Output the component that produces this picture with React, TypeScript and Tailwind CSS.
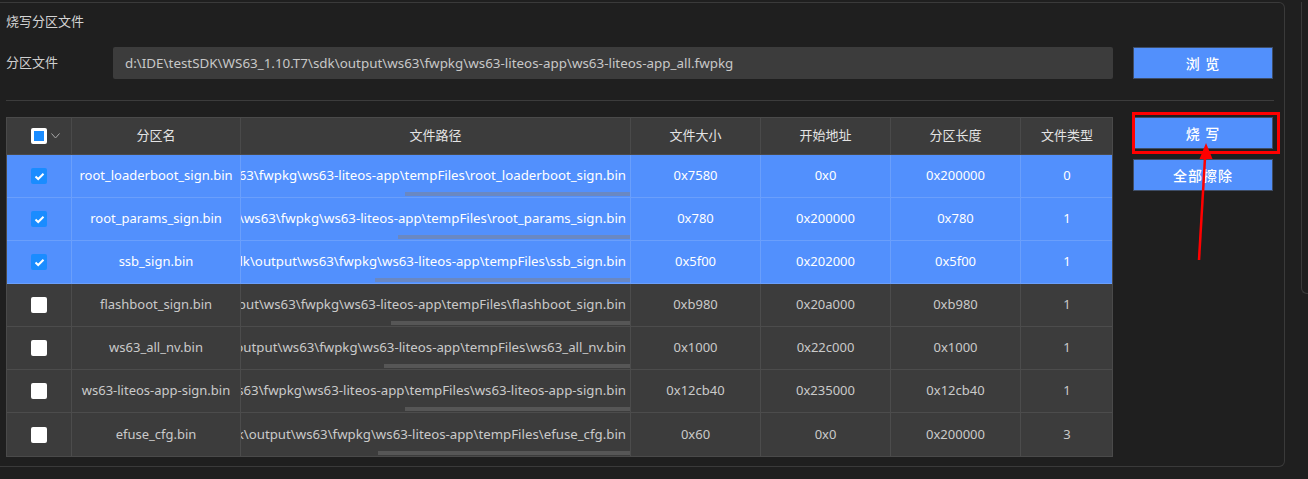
import React from "react";

const base = "d:\\IDE\\testSDK\\WS63_1.10.T7\\sdk\\output\\ws63\\fwpkg\\ws63-liteos-app\\tempFiles\\";

const rows = [
  { name: "root_loaderboot_sign.bin", size: "0x7580", start: "0x0", len: "0x200000", type: "0", checked: true, thumb: 225 },
  { name: "root_params_sign.bin", size: "0x780", start: "0x200000", len: "0x780", type: "1", checked: true, thumb: 232 },
  { name: "ssb_sign.bin", size: "0x5f00", start: "0x202000", len: "0x5f00", type: "1", checked: true, thumb: 255 },
  { name: "flashboot_sign.bin", size: "0xb980", start: "0x20a000", len: "0xb980", type: "1", checked: false, thumb: 239 },
  { name: "ws63_all_nv.bin", size: "0x1000", start: "0x22c000", len: "0x1000", type: "1", checked: false, thumb: 246 },
  { name: "ws63-liteos-app-sign.bin", size: "0x12cb40", start: "0x235000", len: "0x12cb40", type: "1", checked: false, thumb: 225 },
  { name: "efuse_cfg.bin", size: "0x60", start: "0x0", len: "0x200000", type: "3", checked: false, thumb: 252 },
];

const cols = "grid grid-cols-[65px_169px_390px_130px_130px_130px_92px]";

function Check({ checked }: { checked: boolean }) {
  if (checked) {
    return (
      <span className="w-4 h-4 rounded-[2px] bg-[#1a8cff] flex items-center justify-center">
        <svg width="11" height="9" viewBox="0 0 11 9">
          <path d="M1.5 4.5 L4.2 7 L9.5 1.8" stroke="#fff" strokeWidth="2" fill="none" />
        </svg>
      </span>
    );
  }
  return <span className="w-4 h-4 rounded-[2px] bg-white" />;
}

const Btn = ({ children }: { children: React.ReactNode }) => (
  <button className="w-[140px] h-[32px] bg-[#5290fc] border border-[#3e4d66] text-white text-[14px] font-medium tracking-[1px]">
    {children}
  </button>
);

export default function App() {
  return (
    <div className="relative w-[1308px] h-[479px] overflow-hidden bg-[#1f1f1f] text-[13px] font-['Noto_Sans','Noto_Sans_CJK_SC',sans-serif]">
      <div className="flex items-start pt-[2px]">
        <div className="shrink-0 w-[1285px] h-[465px] border border-l-0 border-[#3a3a3a] rounded-tr-[6px] rounded-br-[6px] pl-[6px]">
          <div className="mt-[8px] leading-[20px] text-[#d4d4d4]">烧写分区文件</div>
          <div className="flex items-center mt-[16px] h-[32px]">
            <div className="w-[107px] text-[#cfcfcf]">分区文件</div>
            <div className="w-[1000px] h-[32px] bg-[#3c3c3c] rounded-[2px] flex items-center pl-[12px] text-[#c8c8c8] text-[13.4px] whitespace-nowrap">
              d:\IDE\testSDK\WS63_1.10.T7\sdk\output\ws63\fwpkg\ws63-liteos-app\ws63-liteos-app_all.fwpkg
            </div>
            <div className="ml-[20px]">
              <Btn>浏 览</Btn>
            </div>
          </div>
          <div className="mt-[21px] w-[1268px] h-px bg-[#3c3c3c]" />
          <div className="flex items-start mt-[16px]">
            <div className="w-[1107px] border border-[#4a4a4a] bg-[#3c3c3c]">
              <div className={`${cols} h-[37px] text-[#e4e4e4] border-b border-[#4a4a4a]`}>
                <div className="flex items-center pl-[24px] border-r border-[#4a4a4a]">
                  <span className="w-4 h-4 rounded-[2px] bg-white flex items-center justify-center">
                    <span className="w-[10px] h-[10px] bg-[#1a8cff]" />
                  </span>
                  <svg className="ml-[4px]" width="9" height="6" viewBox="0 0 9 6">
                    <path d="M0.5 0.5 L4.5 5 L8.5 0.5" stroke="#a8a8a8" strokeWidth="1" fill="none" />
                  </svg>
                </div>
                {["分区名", "文件路径", "文件大小", "开始地址", "分区长度"].map((h) => (
                  <div key={h} className="flex items-center justify-center border-r border-[#4a4a4a]">
                    {h}
                  </div>
                ))}
                <div className="flex items-center justify-center">文件类型</div>
              </div>
              {rows.map((r, i) => {
                const line = r.checked ? "border-[#6a9ffc]" : "border-[#4c4c4c]";
                const last = i === rows.length - 1;
                return (
                  <div
                    key={r.name}
                    className={`${cols} h-[43px] ${last ? "" : "border-b"} ${line} ${
                      r.checked ? "bg-[#5290fd] text-white" : "bg-[#3c3c3c] text-[#cacaca]"
                    }`}
                  >
                    <div className={`flex items-center pl-[24px] border-r ${line}`}>
                      <Check checked={r.checked} />
                    </div>
                    <div className={`flex items-center justify-center border-r ${line} whitespace-nowrap`}>{r.name}</div>
                    <div className={`relative flex items-center justify-end overflow-hidden pr-[4px] border-r ${line}`}>
                      <span className="whitespace-nowrap text-[13.25px]">{base + r.name}</span>
                      <span
                        className={`absolute bottom-[1px] right-0 h-[4px] ${r.checked ? "bg-[#6a88c2]" : "bg-[#565656]"}`}
                        style={{ width: r.thumb }}
                      />
                    </div>
                    <div className={`flex items-center justify-center border-r ${line}`}>{r.size}</div>
                    <div className={`flex items-center justify-center border-r ${line}`}>{r.start}</div>
                    <div className={`flex items-center justify-center border-r ${line}`}>{r.len}</div>
                    <div className="flex items-center justify-center">{r.type}</div>
                  </div>
                );
              })}
            </div>
            <div className="ml-[20px] flex flex-col gap-[10px]">
              <Btn>烧 写</Btn>
              <Btn>全部擦除</Btn>
            </div>
          </div>
        </div>
        <div className="shrink-0 ml-[16px] w-[20px] h-[292px] border-l border-b border-[#3a3a3a] rounded-bl-[6px]" />
      </div>

      {/* annotation */}
      <div className="absolute left-[1132px] top-[112px] w-[148px] h-[42px] border-[3px] border-[#ff0000]" />
      <svg className="absolute left-0 top-0" width="1308" height="479" viewBox="0 0 1308 479">
        <path d="M1199 260 L1205 158" stroke="#ff0000" strokeWidth="2.5" fill="none" />
        <path d="M1206 143 L1212.5 159 L1199.5 159 Z" fill="#ff0000" />
      </svg>
    </div>
  );
}
